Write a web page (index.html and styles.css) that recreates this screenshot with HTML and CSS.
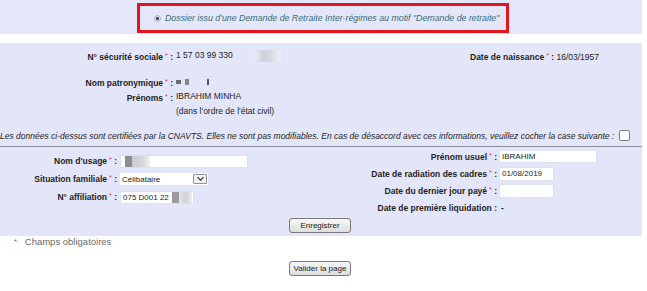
FILE: index.html
```html
<!DOCTYPE html>
<html lang="fr">
<head>
  <meta charset="UTF-8">
  <title>Dossier retraite</title>
  <link rel="stylesheet" href="styles.css">
</head>
<body>

<div class="band">
  <div class="notice">
    <span class="radio"><span class="dot"></span></span>
    <em>Dossier issu d'une Demande de Retraite Inter-régimes au motif "Demande de retraite"</em>
  </div>
</div>

<div class="panel">
  <!-- Données certifiées -->
  <div class="line">
    <span class="lbl">N° sécurité sociale<span class="req">*</span> :</span>
    <span class="val">1 57 03 99 330 <span class="smudge light"></span></span>
    <span class="side"><b>Date de naissance<span class="req">*</span> :</b> 16/03/1957</span>
  </div>
  <div class="line spaced">
    <span class="lbl">Nom patronymique<span class="req">*</span> :</span>
    <span class="val"><span class="smudge tiny"></span><span class="smudge tiny2"></span><span class="smudge tiny3"></span></span>
    <span class="side"></span>
  </div>
  <div class="line">
    <span class="lbl">Prénoms<span class="req">*</span> :</span>
    <span class="val">IBRAHIM MINHA</span>
    <span class="side"></span>
  </div>
  <div class="line">
    <span class="lbl"></span>
    <span class="val">(dans l'ordre de l'état civil)</span>
    <span class="side"></span>
  </div>

  <div class="certif">
    <em>Les données ci-dessus sont certifiées par la CNAVTS. Elles ne sont pas modifiables. En cas de désaccord avec ces informations, veuillez cocher la case suivante :</em>
    <span class="check"></span>
  </div>

  <!-- Données modifiables -->
  <div class="edit">
    <div class="col-left">
      <div class="field">
        <label class="flbl">Nom d'usage<span class="req">*</span> :</label>
        <span class="wrap">
          <input class="txt large" type="text" value="">
          <span class="redact usage"></span>
        </span>
      </div>
      <div class="field">
        <label class="flbl">Situation familiale<span class="req">*</span> :</label>
        <span class="sel">
          <select><option>Célibataire</option></select>
          <span class="arrow"><svg width="9" height="6" viewBox="0 0 9 6"><path d="M1.5 1.2 L4.5 4.2 L7.5 1.2" fill="none" stroke="#333" stroke-width="1.2"/></svg></span>
        </span>
      </div>
      <div class="field">
        <label class="flbl">N° affiliation<span class="req">*</span> :</label>
        <span class="wrap">
          <input class="txt medium" type="text" value="075 D001 22">
          <span class="redact affil"></span>
        </span>
      </div>
    </div>
    <div class="col-right">
      <div class="rfield">
        <label class="rlbl">Prénom usuel<span class="req">*</span> :</label>
        <input class="txt wide" type="text" value="IBRAHIM">
      </div>
      <div class="rfield">
        <label class="rlbl">Date de radiation des cadres<span class="req">*</span> :</label>
        <input class="txt small" type="text" value="01/08/2019">
      </div>
      <div class="rfield">
        <label class="rlbl">Date du dernier jour payé<span class="req">*</span> :</label>
        <input class="txt small" type="text" value="">
      </div>
      <div class="rfield">
        <label class="rlbl">Date de première liquidation :</label>
        <span class="dash">-</span>
      </div>
    </div>
  </div>

  <div class="actions">
    <button class="btn">Enregistrer</button>
  </div>
</div>

<p class="legend"><span class="req">*</span> Champs obligatoires</p>

<div class="actions bottom">
  <button class="btn">Valider la page</button>
</div>

</body>
</html>
```

FILE: styles.css
```css
body {
  margin: 0;
  padding: 0;
  font-family: "Liberation Sans", Arial, sans-serif;
  font-size: 8.5px;
  color: #1e1e1e;
  background-color: #fff;
  width: 642px;
}
.req {
  color: #e0305c;
  font-weight: normal;
  font-size: 7px;
  vertical-align: 2px;
  margin-left: 2px;
}
/* Bandeau du haut */
.band {
  background-color: #e4e7f9;
  height: 34px;
  display: flex;
  justify-content: center;
  align-items: flex-start;
}
.notice {
  margin-top: 3px;
  margin-left: 4px;
  height: 24px;
  width: 352px;
  border: 3px solid #e2141e;
  display: flex;
  align-items: center;
  padding-left: 14px;
  box-sizing: content-box;
  color: #3a6b78;
  white-space: nowrap;
  font-size: 8.8px;
}
.radio {
  width: 5px;
  height: 5px;
  border-radius: 50%;
  background-color: #dfe3ee;
  border: 1px solid #a9b2c2;
  display: inline-flex;
  align-items: center;
  justify-content: center;
  margin-right: 4px;
}
.dot {
  width: 3px;
  height: 3px;
  border-radius: 50%;
  background-color: #2f3540;
}
/* Panneau principal */
.panel {
  margin-top: 9px;
  background-color: #e3e6f8;
  padding-top: 5px;
  padding-bottom: 3px;
}
.line {
  display: grid;
  grid-template-columns: 173px 297px 1fr;
  height: 15px;
  line-height: 15px;
  white-space: nowrap;
}
.line.spaced {
  margin-top: 11px;
}
.lbl {
  text-align: right;
  font-weight: bold;
}
.val {
  padding-left: 3px;
}
.side b {
  font-weight: bold;
}
.smudge {
  display: inline-block;
  vertical-align: middle;
}
.smudge.light {
  width: 26px;
  height: 12px;
  margin-left: 20px;
  background: linear-gradient(90deg, #e9eaf3 0, #cfd1da 30%, #d9dbe4 60%, #eceef6 100%);
}
.smudge.tiny {
  width: 5px;
  height: 4px;
  background-color: #6c6c74;
}
.smudge.tiny2 {
  width: 4px;
  height: 6px;
  margin-left: 4px;
  background-color: #85858d;
}
.smudge.tiny3 {
  width: 2px;
  height: 6px;
  margin-left: 18px;
  background-color: #55555d;
}
.certif {
  margin-top: 9px;
  height: 15px;
  display: flex;
  align-items: center;
  white-space: nowrap;
  padding-bottom: 3px;
  border-bottom: 1px solid #8d8f99;
}
.check {
  width: 9px;
  height: 9px;
  margin-left: 5px;
  background-color: #fff;
  border: 1px solid #808080;
  border-radius: 2px;
  flex-shrink: 0;
}
/* Zone modifiable */
.edit {
  display: flex;
  align-items: flex-start;
}
.col-left {
  width: 320px;
  padding-top: 5px;
}
.col-right {
  flex: 1;
  padding-top: 1px;
}
.field {
  display: flex;
  align-items: center;
  height: 18px;
}
.flbl {
  width: 117px;
  text-align: right;
  font-weight: bold;
  white-space: nowrap;
}
.wrap {
  position: relative;
  margin-left: 3px;
  display: inline-flex;
}
.rfield {
  display: flex;
  align-items: center;
  height: 17px;
}
.rlbl {
  width: 177px;
  text-align: right;
  font-weight: bold;
  white-space: nowrap;
}
.txt {
  height: 13px;
  box-sizing: border-box;
  border: 1px solid #dde0ee;
  background-color: #fff;
  font-family: "Liberation Sans", Arial, sans-serif;
  font-size: 8px;
  color: #222;
  padding: 0 2px;
  margin: 0;
  outline: none;
}
.rfield .txt {
  margin-left: 2px;
}
.txt.large { width: 128px; }
.txt.medium { width: 74px; }
.txt.wide { width: 98px; }
.txt.small { width: 55px; height: 14px; }
.redact {
  position: absolute;
  top: 1px;
  height: 11px;
}
.redact.usage {
  left: 5px;
  width: 25px;
  background: linear-gradient(90deg, #8c8c92 0, #8c8c92 28%, #c9c9ce 28%, #d7d7dc 70%, #f2f2f4 100%);
}
.redact.affil {
  left: 52px;
  width: 20px;
  background: linear-gradient(90deg, #9a9aa0 0, #9a9aa0 35%, #e6e6ea 35%, #d0d0d5 70%, #f0f0f2 100%);
}
.sel {
  margin-left: 3px;
  display: inline-flex;
  align-items: center;
  height: 12px;
  width: 88px;
  background-color: #fff;
  box-sizing: border-box;
}
.sel select {
  appearance: none;
  -webkit-appearance: none;
  border: none;
  background: transparent;
  font-family: "Liberation Sans", Arial, sans-serif;
  font-size: 8px;
  color: #222;
  padding: 0 2px;
  margin: 0;
  height: 12px;
  flex: 1;
  outline: none;
}
.arrow {
  width: 14px;
  height: 10px;
  margin-right: 1px;
  border: 1px solid #8a92a0;
  border-radius: 1px;
  background-color: #f4f4f4;
  box-sizing: border-box;
  display: flex;
  align-items: center;
  justify-content: center;
}
.dash {
  margin-left: 4px;
  font-weight: bold;
}
/* Boutons */
.actions {
  display: flex;
  justify-content: center;
  margin-top: 2px;
}
.btn {
  width: 62px;
  height: 15px;
  margin-left: -2px;
  padding: 0;
  font-family: "Liberation Sans", Arial, sans-serif;
  font-size: 8px;
  color: #222;
  background: linear-gradient(#f7f7f7, #dedede);
  border: 1px solid #7a7a7a;
  border-radius: 3px;
  cursor: pointer;
}
.legend {
  margin: 0;
  height: 11px;
  line-height: 11px;
  padding-left: 12px;
  font-size: 9.5px;
  color: #6a6a6a;
}
.legend .req {
  font-size: 8px;
  margin-right: 5px;
  vertical-align: 1px;
}
.actions.bottom {
  margin-top: 14px;
}
```
